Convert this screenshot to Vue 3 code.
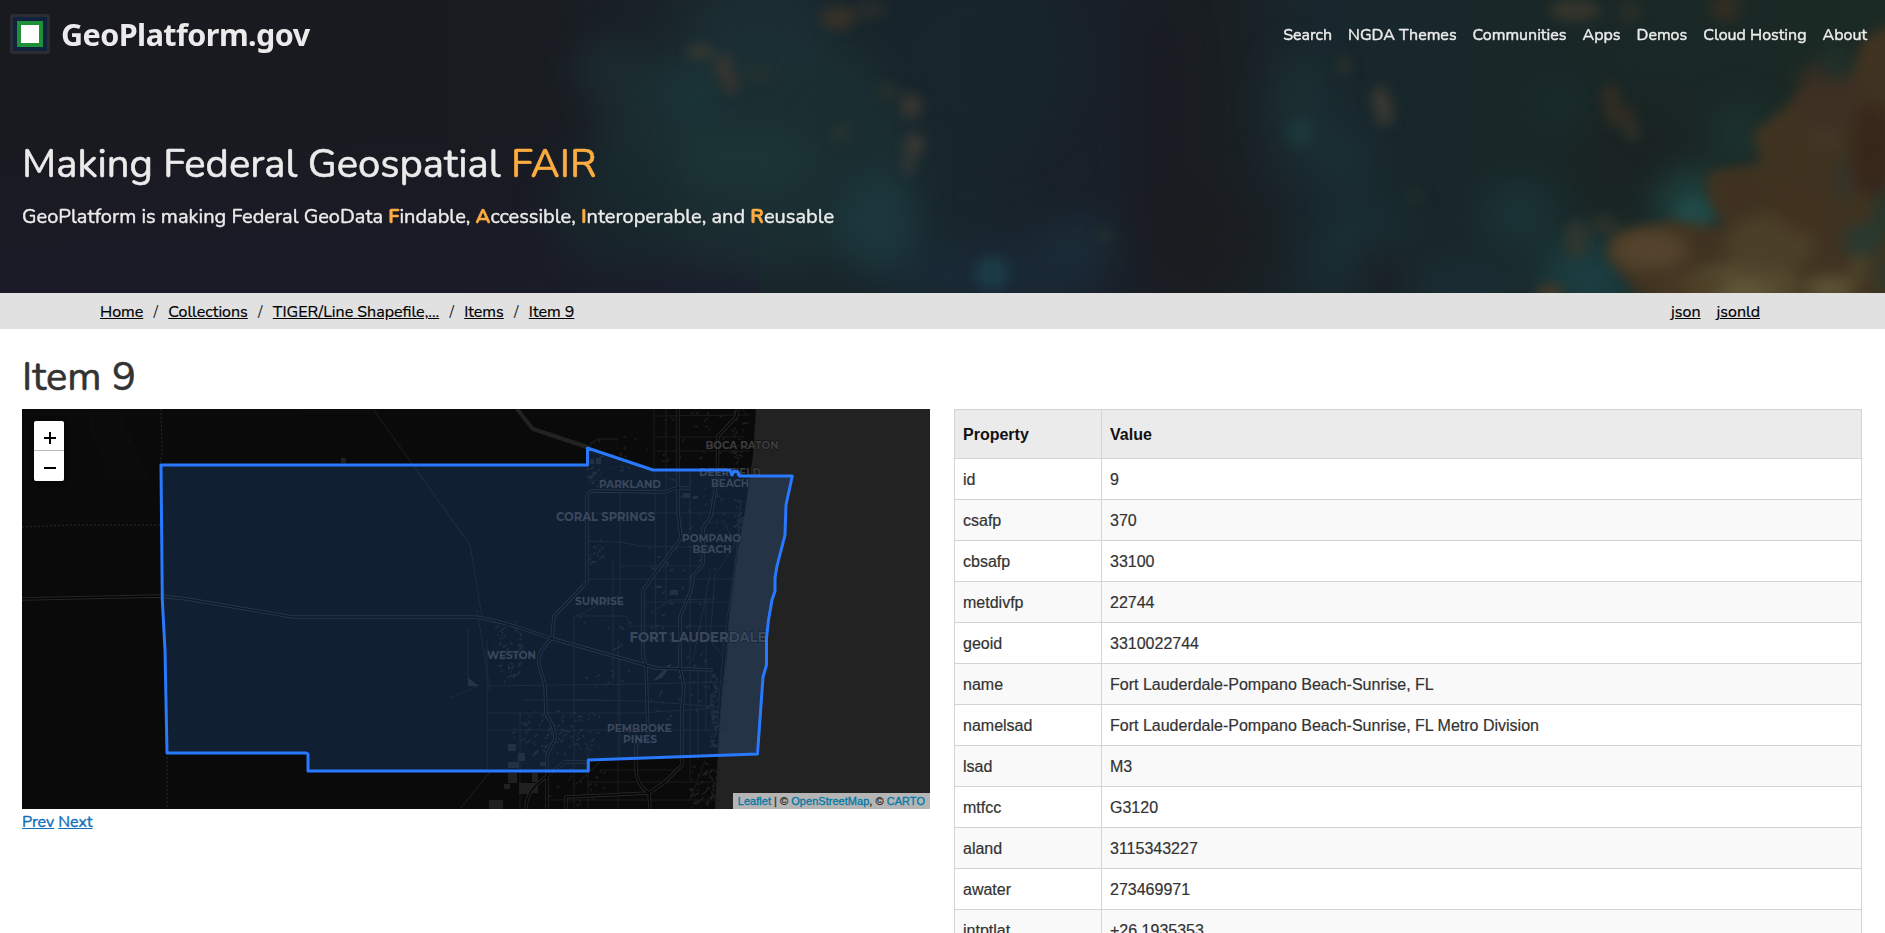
<script setup>
const navLinks = ['Search', 'NGDA Themes', 'Communities', 'Apps', 'Demos', 'Cloud Hosting', 'About']
const crumbs = ['Home', 'Collections', 'TIGER/Line Shapefile,...', 'Items', 'Item 9']
const rows = [
  ['id', '9'],
  ['csafp', '370'],
  ['cbsafp', '33100'],
  ['metdivfp', '22744'],
  ['geoid', '3310022744'],
  ['name', 'Fort Lauderdale-Pompano Beach-Sunrise, FL'],
  ['namelsad', 'Fort Lauderdale-Pompano Beach-Sunrise, FL Metro Division'],
  ['lsad', 'M3'],
  ['mtfcc', 'G3120'],
  ['aland', '3115343227'],
  ['awater', '273469971'],
  ['intptlat', '+26.1935353'],
]

// Soft patches of the hero backdrop: cx, cy, rx, ry, colour, opacity
const patches = [
  [760, 150, 160, 120, '#1c3336', 0.6],
  [690, 95, 28, 26, '#1a3840', 0.7],
  [610, 70, 35, 28, '#1c3036', 0.7],
  [760, 30, 70, 55, '#1c3036', 0.7],
  [880, 225, 40, 50, '#1c3c42', 0.75],
  [745, 160, 75, 40, '#1e383a', 0.6],
  [620, 210, 70, 60, '#18292d', 0.6],
  [980, 60, 100, 90, '#17252c', 0.7],
  [1155, 100, 30, 110, '#191b22', 0.6],
  [1190, 235, 60, 60, '#1a1b20', 0.6],
  [1000, 275, 110, 35, '#1a2a38', 0.8],
  [1080, 238, 40, 18, '#1b3039', 0.8],
  [1300, 110, 30, 60, '#1c3235', 0.7],
  [1345, 160, 30, 40, '#1b3137', 0.7],
  [1365, 225, 45, 20, '#1b3339', 0.6],
  [1335, 262, 20, 20, '#1a333b', 0.8],
  [1385, 278, 20, 28, '#1b1f24', 0.9],
  [1262, 240, 20, 45, '#1b1f22', 0.7],
  [1520, 215, 40, 34, '#1b3639', 0.8],
  [1560, 105, 26, 25, '#1a2f2e', 0.7],
  [1640, 160, 65, 50, '#1a2422', 0.9],
  [1690, 205, 34, 35, '#1f4643', 0.9],
  [1590, 275, 50, 38, '#1c4044', 0.9],
  [1470, 285, 60, 22, '#1b3038', 0.8],
  [1740, 135, 30, 30, '#1d3531', 0.8],
]
const warm = [
  [700, 52, 13, 7, '#3b3a32', 0.9],
  [723, 66, 10, 12, '#3b372f', 0.8],
  [730, 82, 9, 12, '#3a3530', 0.8],
  [760, 74, 12, 8, '#2e332d', 0.5],
  [838, 18, 18, 12, '#3a3228', 0.85],
  [870, 10, 15, 8, '#35332c', 0.6],
  [887, 92, 12, 8, '#2e332c', 0.6],
  [911, 106, 11, 13, '#413932', 0.75],
  [914, 145, 10, 12, '#413b33', 0.8],
  [908, 165, 7, 10, '#3a3b35', 0.7],
  [840, 133, 8, 9, '#2f372f', 0.7],
  [992, 273, 18, 17, '#1b3e48', 0.8],
  [1105, 236, 8, 7, '#26372e', 0.6],
  [1300, 132, 14, 14, '#1c3d3f', 0.6],
  [1380, 98, 10, 12, '#3c3b33', 0.8],
  [1384, 112, 10, 14, '#3c3b33', 0.8],
  [1344, 66, 8, 12, '#292f2a', 0.8],
  [1415, 196, 10, 8, '#20302a', 0.7],
  [1575, 10, 26, 11, '#3c382e', 0.8],
  [1630, 12, 12, 11, '#33332a', 0.6],
  [1725, 8, 16, 14, '#362e22', 0.8],
  [1611, 98, 9, 15, '#352e22', 0.9],
  [1620, 116, 16, 11, '#352e22', 0.8],
  [1632, 132, 8, 10, '#35332a', 0.8],
  [1577, 240, 12, 20, '#34382e', 0.8],
  [1605, 225, 14, 10, '#35342a', 0.7],
  [1550, 292, 14, 8, '#493a29', 0.9],
  [1695, 212, 19, 14, '#214a48', 0.9],
]
const ridge = [
  [1650, 250, 38, 20, '#57462f', 0.85],
  [1740, 285, 60, 22, '#584e32', 0.9],
  [1770, 245, 45, 30, '#4d422b', 0.8],
  [1690, 285, 34, 10, '#4a3b24', 0.8],
  [1745, 293, 25, 10, '#625a3b', 0.9],
  [1830, 288, 26, 12, '#605839', 0.9],
  [1740, 195, 22, 18, '#3f3120', 0.9],
  [1800, 210, 22, 24, '#41311f', 0.7],
  [1830, 95, 34, 36, '#3d3023', 0.8],
  [1872, 150, 20, 48, '#35261a', 0.9],
  [1825, 138, 12, 10, '#453a2d', 0.8],
  [1843, 180, 8, 28, '#31342a', 0.8],
  [1862, 240, 20, 16, '#263b33', 0.85],
  [1884, 215, 10, 26, '#20382f', 0.9],
  [1859, 268, 8, 13, '#504b30', 0.8],
  [1884, 275, 9, 18, '#2b3c30', 0.8],
  [1836, 62, 14, 18, '#1f312a', 0.9],
]

const labels = [
  { t: 'BOCA RATON', x: 742, y: 449, w: 73, s: 11.3 },
  { t: 'DEERFIELD', x: 730, y: 475.5, w: 62, s: 11.3 },
  { t: 'BEACH', x: 730, y: 487, w: 38, s: 11.3 },
  { t: 'PARKLAND', x: 630, y: 488, w: 62, s: 11.3 },
  { t: 'CORAL SPRINGS', x: 605.5, y: 521, w: 99, s: 12.4 },
  { t: 'POMPANO', x: 711.5, y: 542, w: 59, s: 11.3 },
  { t: 'BEACH', x: 712, y: 553, w: 39, s: 11.3 },
  { t: 'SUNRISE', x: 599.5, y: 605, w: 49, s: 11.3 },
  { t: 'FORT LAUDERDALE', x: 698, y: 642, w: 137, s: 14.2 },
  { t: 'WESTON', x: 511.5, y: 659, w: 49, s: 11.3 },
  { t: 'PEMBROKE', x: 639.5, y: 732, w: 65, s: 11.3 },
  { t: 'PINES', x: 640, y: 743, w: 34, s: 11.3 },
]

// Double-lined highways
const highways = [
  'M22 599 L160 596 L187 599 L293 617 L475 617 Q500 620 550 638 L656 668 L713 670',
  'M587 582 L554 616 L552 638 Q534 655 540 668 L545 685 L546 714 Q560 735 552 745 L547 755 L547 809',
  'M587 582 V497 Q588 491 594 491 L665 492 L676 488 H690',
  'M678 409 V512 L681 538 L643 590 V656 L646 665 L648 735 L636 745 V768 Q636 785 649 793 L650 809',
  'M738 409 L736 417 L718 436 L717 480 L711 516 L703 528 L703 564 L693 576 L691 590 L680 617 V668 L684 685 L682 710 V765 L665 782 L649 793 L566 797 V809',
  'M526 809 Q526 795 536 785 L547 776 L565 762 H588',
]
// Thin arterial streets
const streets = [
  'M654 409 V470', 'M666 409 V600', 'M654 437 H745', 'M654 451 H750', 'M654 416 L750 415',
  'M655 470 V560 L656 640', 'M620 490 V595 L574 617', 'M587 513 H740', 'M588 541 L620 542 L640 546 L678 547 H734',
  'M588 579 H733', 'M620 566 H700', 'M643 602 H730', 'M573 616 H625 Q629 617 629 626 H725', 'M574 617 V809', 'M487 640 V770',
  'M613 560 V685', 'M487 686 L640 684 L728 682', 'M574 700 L640 701 L720 707', 'M487 713 H640 L715 708', 'M487 730 H725',
  'M618 640 V730 V809', 'M588 745 V809', 'M620 660 V760', 'M698 665 V760', 'M690 470 V780', 'M588 782 H720', 'M548 800 H722',
  'M723 520 L735 545 L715 575 L710 640 L722 655', 'M650 640 H728', 'M650 614 L670 600 L715 599', 'M740 525 L731 600 L719 730',
  'M741 500 L736 555 L724 640 L716 735', 'M706 600 V730', 'M600 770 H680', 'M522 700 H606', 'M520 713 V809', 'M710 575 L693 660',
]
const faint = [
  'M373 409 L470 545 L482 617', 'M468 628 L468 680 L478 686 L450 698', 'M477 610 L490 690', 'M460 809 L490 772',
  'M705 760 L690 800', 'M600 762 L575 785',
]

// Deterministic specks standing for lakes and blocks of buildings
let seed = 71
const rand = () => {
  seed = (seed * 16807) % 2147483647
  return seed / 2147483647
}
const zones = [
  [494, 622, 28, 60, 60], [514, 712, 85, 45, 100], [588, 436, 40, 50, 20], [588, 468, 16, 18, 24], [590, 540, 15, 24, 16], [634, 409, 108, 60, 26],
  [670, 480, 60, 50, 28], [645, 545, 70, 90, 34], [575, 600, 60, 90, 22], [645, 655, 70, 70, 30], [690, 765, 28, 42, 60],
  [545, 770, 60, 35, 26], [711, 675, 6, 75, 60], [733, 409, 13, 60, 34], [735, 500, 8, 30, 24],
]
const specks = zones.flatMap(([x, y, w, h, n]) =>
  Array.from({ length: n }, () => {
    const px = x + rand() * w
    const py = y + rand() * h
    const a = (rand() * 7 - 3.5).toFixed(1)
    const b = (rand() * 5 - 2.5).toFixed(1)
    return `M${px.toFixed(1)} ${py.toFixed(1)} q${b} ${a} ${a} ${b}`
  })
).join(' ')
const blocks = [
  [508, 744, 8, 7], [518, 753, 7, 8], [508, 762, 11, 6], [508, 773, 9, 10], [519, 783, 11, 11], [532, 773, 6, 9], [530, 783, 8, 10],
  [489, 800, 14, 9], [504, 784, 6, 5], [540, 762, 7, 4], [670, 590, 8, 5], [590, 459, 4, 5], [596, 458, 5, 6],
  [683, 493, 7, 5], [693, 496, 5, 3], [341, 458, 5, 5], [656, 586, 6, 2],
]
</script>

<template>
  <div class="page">
    <header class="hero">
      <svg class="backdrop" viewBox="0 0 1885 293" preserveAspectRatio="none" aria-hidden="true">
        <defs>
          <linearGradient id="base" x1="0" x2="1" y1="0" y2="0">
            <stop offset="0" stop-color="#191a1f" />
            <stop offset="0.28" stop-color="#191b21" />
            <stop offset="0.36" stop-color="#192529" />
            <stop offset="0.5" stop-color="#18262c" />
            <stop offset="0.58" stop-color="#19202a" />
            <stop offset="0.64" stop-color="#1a1e22" />
            <stop offset="0.7" stop-color="#18272d" />
            <stop offset="0.85" stop-color="#192726" />
            <stop offset="1" stop-color="#1c2a25" />
          </linearGradient>
          <linearGradient id="low" x1="0" x2="0" y1="0" y2="1">
            <stop offset="0.4" stop-color="#1b1b2e" stop-opacity="0" />
            <stop offset="1" stop-color="#1b1b2e" stop-opacity="0.55" />
          </linearGradient>
          <filter id="soft" x="-10%" y="-40%" width="120%" height="180%" color-interpolation-filters="sRGB"><feGaussianBlur stdDeviation="17" /></filter>
          <filter id="mid" x="-10%" y="-20%" width="120%" height="140%" color-interpolation-filters="sRGB"><feGaussianBlur stdDeviation="6" /></filter>
          <filter id="ridge" x="-20%" y="-20%" width="140%" height="140%" color-interpolation-filters="sRGB"><feGaussianBlur stdDeviation="8" /></filter>
        </defs>
        <rect width="1885" height="293" fill="url(#base)" />
        <rect width="760" height="293" fill="url(#low)" />
        <g filter="url(#soft)">
          <ellipse v-for="(p, i) in patches" :key="i" :cx="p[0]" :cy="p[1]" :rx="p[2]" :ry="p[3]" :fill="p[4]" :opacity="p[5]" />
        </g>
        <g filter="url(#mid)">
          <ellipse v-for="(p, i) in warm" :key="i" :cx="p[0]" :cy="p[1]" :rx="p[2]" :ry="p[3]" :fill="p[4]" :opacity="p[5]" />
          <path d="M1900 20 L1864 38 L1848 78 L1817 82 L1785 107 L1753 133 L1761 163 L1705 173 L1709 200 L1725 228 L1673 220 L1617 233 L1605 253 L1649 310 L1900 310Z" fill="#433421" fill-opacity="0.92" />
        </g>
        <g filter="url(#ridge)">
          <ellipse v-for="(p, i) in ridge" :key="i" :cx="p[0]" :cy="p[1]" :rx="p[2]" :ry="p[3]" :fill="p[4]" :opacity="p[5]" />
        </g>
      </svg>
      <div class="topbar">
        <a class="brand">
          <span class="mark"><span class="mark-core"></span></span>
          <span class="brand-name">GeoPlatform.gov</span>
        </a>
        <nav class="nav">
          <a v-for="n in navLinks" :key="n">{{ n }}</a>
        </nav>
      </div>
      <h1 class="title">Making Federal Geospatial <em>FAIR</em></h1>
      <p class="tagline">GeoPlatform is making Federal GeoData <b>F</b>indable, <b>A</b>ccessible, <b>I</b>nteroperable, and <b>R</b>eusable</p>
    </header>

    <div class="crumbbar">
      <div class="crumbs">
        <template v-for="(c, i) in crumbs" :key="c">
          <span v-if="i" class="slash">/</span>
          <a>{{ c }}</a>
        </template>
      </div>
      <div class="formats"><a>json</a><a>jsonld</a></div>
    </div>

    <main class="content">
      <h2 class="heading">Item 9</h2>
      <div class="columns">
        <section class="left">
          <div class="map">
            <svg class="tiles" viewBox="22 409 908 400">
              <defs>
                <pattern id="dots" width="4" height="4" patternUnits="userSpaceOnUse"><rect width="1" height="1" fill="#171717" /><rect x="2" y="2" width="1" height="1" fill="#171717" /></pattern>
              </defs>
              <rect x="22" y="409" width="908" height="400" fill="#0a0a0a" />
              <path d="M90 409 H118 L150 480 H103 V460 L90 430Z M300 409 H376 L380 414 H303Z M590 440 H618 V450 H600Z" fill="url(#dots)" />
              <path d="M756 409 L753 455 L750 475 L746 505 L738 550 L729 620 L727 655 L722 690 L718 750 L715 809 H930 V409Z" fill="#222" />
              <path d="M517 409 L533 429 L560 438 L587 447" fill="none" stroke="#222" stroke-width="4" />
              <path d="M587 448 L597 439 H618" fill="none" stroke="#222" />
              <g fill="none" stroke="#1b1b1b" stroke-width="1">
                <path v-for="(d, i) in streets" :key="i" :d="d" />
              </g>
              <g fill="none" stroke="#191919" stroke-width="1.2">
                <path v-for="(d, i) in faint" :key="i" :d="d" />
              </g>
              <path :d="specks" fill="none" stroke="#202020" stroke-width="1.3" />
              <rect v-for="(b, i) in blocks" :key="i" :x="b[0]" :y="b[1]" :width="b[2]" :height="b[3]" fill="#202020" />
              <path d="M468 678 L479 686 H468Z M653 681 L668 665 L672 664 L662 678Z" fill="#242424" />
              <path d="M161 409 L162 452 L160 465 M22 527 L70 525 H161 M167 753 V809" fill="none" stroke="#292929" stroke-dasharray="2 2" />
              <g fill="none" stroke-linejoin="round">
                <path v-for="(d, i) in highways" :key="'a' + i" :d="d" stroke="#262626" stroke-width="3.4" />
                <path v-for="(d, i) in highways" :key="'b' + i" :d="d" stroke="#060606" stroke-width="1.6" />
              </g>
              <g class="labels">
                <text v-for="(l, i) in labels" :key="i" :x="l.x" :y="l.y" :font-size="l.s" :textLength="l.w" lengthAdjust="spacingAndGlyphs">{{ l.t }}</text>
              </g>
              <path
                d="M161 465 H587.5 V448 L653 470 H730 L732 475 L734 471 L738 472 L739.5 476 H792.3 L786 505 L785 535 L777 566 L775 578 V591 L772 600 L768.5 620 L766.5 638 V665 L763 677 L757.5 754 L588.3 760 V771 H308 V754 L306 753 H167 L165 650 L162.3 600Z"
                fill="#3388ff" fill-opacity="0.17" stroke="#2979ff" stroke-width="3" stroke-linejoin="round" />
            </svg>
            <div class="zoom">
              <a><svg viewBox="0 0 14 14"><path d="M1 7H13M7 1V13" /></svg></a>
              <a><svg viewBox="0 0 14 14"><path d="M1 7H13" /></svg></a>
            </div>
            <div class="attribution"><a>Leaflet</a> | © <a>OpenStreetMap</a>, © <a>CARTO</a></div>
          </div>
          <div class="pager"><a>Prev</a><a>Next</a></div>
        </section>
        <table class="props">
          <thead><tr><th>Property</th><th>Value</th></tr></thead>
          <tbody>
            <tr v-for="r in rows" :key="r[0]"><td>{{ r[0] }}</td><td>{{ r[1] }}</td></tr>
          </tbody>
        </table>
      </div>
    </main>
  </div>
</template>

<style>
body { margin: 0; overflow: hidden; background: #fff; }
</style>

<style scoped>
.page {
  height: 933px;
  overflow: hidden;
  font-family: Nunito, Lato, "Liberation Sans", sans-serif;
  font-size: 16px;
  line-height: 24px;
  color: #333;
}
.hero { position: relative; height: 293px; overflow: hidden; color: #ebebeb; }
.backdrop { position: absolute; inset: 0; width: 100%; height: 100%; }
.topbar { position: relative; display: flex; justify-content: space-between; padding: 14px 18px 0 10px; height: 40px; }
.brand { display: flex; gap: 11px; }
.mark { box-sizing: border-box; width: 40px; height: 40px; border: 3px solid #2c2d32; border-radius: 3px; background: #11233c; display: grid; place-items: center; }
.mark-core { width: 18px; height: 18px; border: 4px solid #1e9138; background: #fff; }
.brand-name { font: 700 30.5px/40px "Noto Sans", sans-serif; letter-spacing: -0.55px; white-space: nowrap; }
.nav { display: flex; gap: 16px; padding-top: 9px; }
.nav a { white-space: nowrap; -webkit-text-stroke: 0.45px; }
.title { position: relative; margin: 86px 0 0 22px; font-size: 40px; line-height: 48px; font-weight: 400; white-space: nowrap; -webkit-text-stroke: 0.6px; }
.title em { font-style: normal; color: #fdac42; }
.tagline { position: relative; margin: 15px 0 0 22px; font-size: 20px; line-height: 28px; white-space: nowrap; -webkit-text-stroke: 0.4px; }
.tagline b { color: #fdac42; }
.crumbbar { display: flex; justify-content: space-between; height: 36px; padding: 0 125px 0 100px; background: #e1e1e1; line-height: 39px; color: #222; }
.crumbs { display: flex; }
.crumbs a, .formats a { color: #000; text-decoration: underline; white-space: nowrap; -webkit-text-stroke: 0.2px; }
.slash { width: 25px; text-align: center; }
.formats { display: flex; gap: 16px; }
.content { padding: 0 23px 0 22px; }
.heading { margin: 0; padding-top: 23px; height: 57px; font-size: 40px; line-height: 50px; font-weight: 400; -webkit-text-stroke: 0.6px; }
.columns { display: flex; gap: 24px; align-items: flex-start; }
.left { width: 908px; }
.map { position: relative; height: 400px; background: #0a0a0a; }
.tiles { display: block; width: 908px; height: 400px; }
.labels text { font-family: Montserrat, "Open Sans", sans-serif; font-weight: 700; text-anchor: middle; fill: #3c3c3c; stroke: #0c0c0c; stroke-width: 1px; paint-order: stroke; }
.zoom { position: absolute; left: 12px; top: 12px; width: 30px; border-radius: 2px; overflow: hidden; box-shadow: 0 1px 5px rgba(0, 0, 0, 0.65); }
.zoom a { box-sizing: border-box; display: flex; align-items: center; justify-content: center; height: 30px; background: #fff; padding: 4px 0 0 2px; }
.zoom a:first-child { border-bottom: 1px solid #bbb; }
.zoom svg { width: 14px; height: 14px; fill: none; stroke: #000; stroke-width: 2; }
.attribution { position: absolute; right: 0; bottom: 0; height: 16px; padding: 0 5px; background: #b5b5b5; font: 11px/16px "Liberation Sans", Arial, sans-serif; letter-spacing: 0.03px; color: #333; white-space: nowrap; -webkit-text-stroke: 0.3px; }
.attribution a { color: #0078a8; }
.pager { display: flex; gap: 4px; padding-top: 1px; }
.pager a { color: #1470bd; text-decoration: underline; -webkit-text-stroke: 0.4px; }
.props { width: 908px; border-collapse: collapse; table-layout: fixed; font-family: "Liberation Sans", Arial, sans-serif; font-size: 16px; color: #333; }
.props th, .props td { box-sizing: border-box; border: 1px solid #d4d4d4; padding: 9px 8px 7px; height: 41px; text-align: left; white-space: nowrap; line-height: 24px; }
.props td { -webkit-text-stroke: 0.2px; }
.props th { height: 49px; background: #ebebeb; color: #111; }
.props th:first-child { width: 147px; }
.props tbody tr:nth-child(even) { background: #f9f9f9; }
</style>
